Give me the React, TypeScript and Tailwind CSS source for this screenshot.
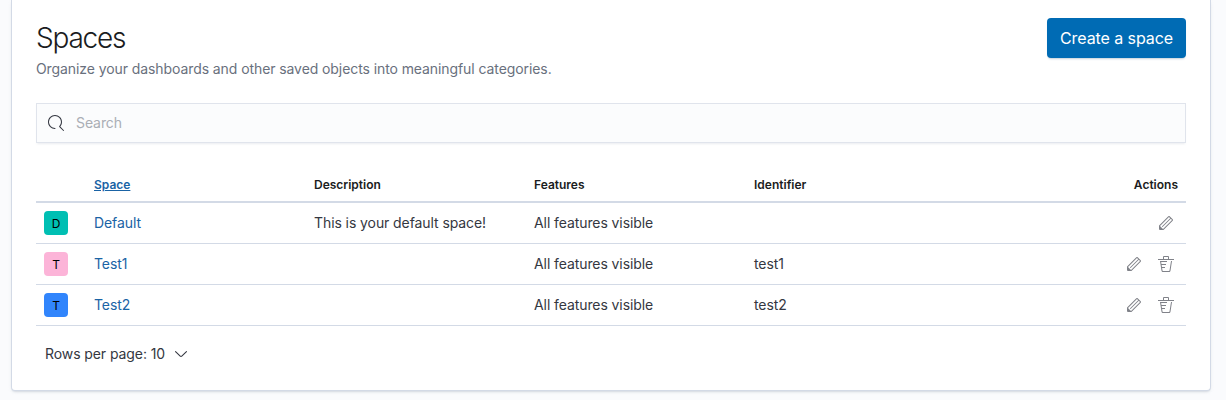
const ICONS = {
  search:
    'M11.271 11.978l3.872 3.873a.502.502 0 0 0 .708 0 .502.502 0 0 0 0-.708l-3.565-3.564c2.38-2.747 2.267-6.923-.342-9.532-2.73-2.73-7.17-2.73-9.898 0-2.728 2.729-2.728 7.17 0 9.9a6.955 6.955 0 0 0 4.949 2.05.5.5 0 0 0 0-1 5.96 5.96 0 0 1-4.242-1.757 6.01 6.01 0 0 1 0-8.486 6.004 6.004 0 0 1 8.484 0 6.01 6.01 0 0 1 0 8.486.5.5 0 0 0 .034.738z',
  pencil:
    'M12.148 3.148L11 2l-9 9v3h3l9-9-1.144-1.144-8.002 7.998a.502.502 0 0 1-.708 0 .502.502 0 0 1 0-.708l8.002-7.998zM11 1c.256 0 .512.098.707.293l3 3a.999.999 0 0 1 0 1.414l-9 9A.997.997 0 0 1 5 15H2a1 1 0 0 1-1-1v-3c0-.265.105-.52.293-.707l9-9A.997.997 0 0 1 11 1zM5 14H2v-3l3 3z',
  trash:
    'M11 3h5v1H0V3h5V1a1 1 0 0 1 1-1h4a1 1 0 0 1 1 1v2zm-7.056 8H7v1H4.1l.392 2.519c.042.269.254.458.493.458h6.03c.239 0 .451-.189.493-.458l1.498-9.576H14l-1.504 9.73c-.116.747-.74 1.304-1.481 1.304h-6.03c-.741 0-1.365-.557-1.481-1.304l-1.511-9.73H9V5.95H3.157L3.476 8H8v1H3.632l.312 2zM6 3h4V1H6v2z',
  arrowDown:
    'M13.069 5.157L8.384 9.768a.546.546 0 0 1-.768 0L2.93 5.158a.552.552 0 0 0-.771 0 .53.53 0 0 0 0 .759l4.684 4.61c.641.631 1.672.63 2.312 0l4.684-4.61a.53.53 0 0 0 0-.76.552.552 0 0 0-.771 0z',
};

function Icon({ type, className = '' }: { type: keyof typeof ICONS; className?: string }) {
  return (
    <svg className={`size-4 shrink-0 ${className}`} viewBox="0 0 16 16" fill="currentColor" aria-hidden="true">
      <path fillRule="evenodd" d={ICONS[type]} />
    </svg>
  );
}

interface Space {
  name: string;
  initial: string;
  color: string;
  description?: string;
  identifier?: string;
}

const SPACES: Space[] = [
  { name: 'Default', initial: 'D', color: 'bg-[#00bfb3]', description: 'This is your default space!' },
  { name: 'Test1', initial: 'T', color: 'bg-[#fcb4d8]', identifier: 'test1' },
  { name: 'Test2', initial: 'T', color: 'bg-[#3185fc]', identifier: 'test2' },
];

const COLUMNS = 'grid grid-cols-[50px_repeat(5,220px)]';

export default function App() {
  return (
    <div className="h-[400px] overflow-hidden bg-[#fafbfd] px-[11px] font-['Inter','Liberation_Sans',sans-serif] text-[14px] leading-[21px] text-[#343741]">
      <main className="h-[391px] w-[1200px] rounded-b-[4px] border border-t-0 border-[#d3dae6] bg-white px-6 pt-[18px] tracking-[-0.085px] shadow-[0_2px_2px_-1px_rgba(152,162,179,0.3),0_1px_5px_-2px_rgba(152,162,179,0.3)]">
        <header className="flex h-[85px] items-start justify-between">
          <div>
            <h1 className="text-[28px] leading-10 font-light tracking-[-0.043em] text-[#1a1c21]">Spaces</h1>
            <p className="text-[#69707d]">Organize your dashboards and other saved objects into meaningful categories.</p>
          </div>
          <button className="h-10 w-[139px] rounded-[4px] bg-[#006bb4] text-[16px] text-white shadow-[0_2px_2px_-1px_rgba(54,97,126,0.3)]">
            Create a space
          </button>
        </header>

        <label className="flex h-10 items-center gap-3 border border-[#e0e4ec] bg-[#fbfcfd] px-[11px] shadow-[0_2px_2px_-1px_rgba(152,162,179,0.2)]">
          <Icon type="search" />
          <input
            type="text"
            placeholder="Search"
            className="min-w-0 flex-1 bg-transparent pb-0.5 outline-none placeholder:text-[#aaaeb5]"
          />
        </label>

        <div role="table" className="mt-6">
          <div role="row" className={`${COLUMNS} h-9 items-center border-b-2 border-[#d3dae6] pt-0.5 text-[12px] leading-[18px] font-semibold tracking-normal text-[#1a1c21]`}>
            <span />
            <span className="px-2 text-[#1a63a5] underline">Space</span>
            <span className="px-2">Description</span>
            <span className="px-2">Features</span>
            <span className="px-2">Identifier</span>
            <span className="px-2 text-right">Actions</span>
          </div>
          {SPACES.map((space) => (
            <div role="row" key={space.name} className={`${COLUMNS} h-[41px] items-center border-b border-[#d3dae6]`}>
              <span className="px-2">
                <span className={`flex size-6 items-center justify-center rounded-[4px] text-[12px] text-black ${space.color}`}>
                  {space.initial}
                </span>
              </span>
              <a className="px-2 pb-0.5 text-[#1a63a5]">{space.name}</a>
              <span className="px-2 pb-0.5">{space.description}</span>
              <span className="px-2 pb-0.5">All features visible</span>
              <span className="px-2 pb-0.5">{space.identifier}</span>
              <span className="flex justify-end gap-4 pr-3 text-[#808289]">
                <Icon type="pencil" />
                {space.identifier && <Icon type="trash" />}
              </span>
            </div>
          ))}
        </div>

        <button className="mt-[17px] ml-[9px] flex items-center gap-2">
          Rows per page: 10
          <Icon type="arrowDown" />
        </button>
      </main>
    </div>
  );
}
